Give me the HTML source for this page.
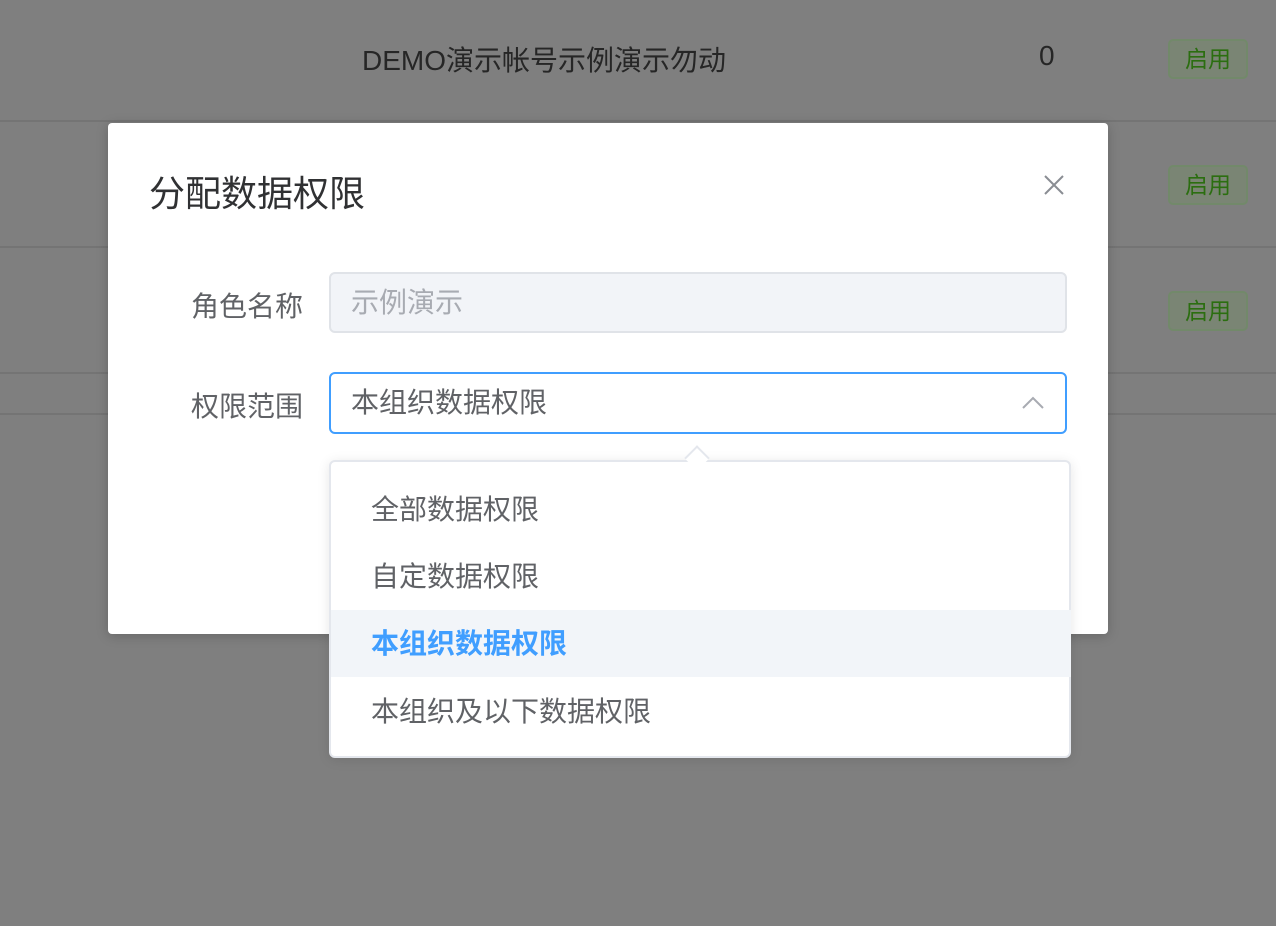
<!DOCTYPE html>
<html><head><meta charset="utf-8"><style>
*{margin:0;padding:0;box-sizing:border-box}
body{width:1276px;height:926px;overflow:hidden;background:#7f7f7f;font-family:"Liberation Sans","Noto Sans CJK SC",sans-serif;position:relative}
.abs{position:absolute}
.line{position:absolute;left:0;width:1276px;height:2px;background:#747474}
.tag{position:absolute;left:1168px;width:80px;height:40px;border:2px solid #72896a;background:#7a8574;border-radius:5px;color:#2b6e10;font-size:23px;line-height:36px;text-align:center}
.lbl{position:absolute;width:220px;left:83px;text-align:right;font-size:28px;color:#606266}
.item{position:absolute;left:0;width:740px;height:67px;line-height:67px;padding-left:40px;font-size:28px;color:#606266}
</style></head><body>
<div class="abs" style="left:362px;top:39px;font-size:28px;color:#262626">DEMO演示帐号示例演示勿动</div>
<div class="abs" style="left:1039px;top:40px;font-size:28px;color:#262626">0</div>
<div class="line" style="top:120px"></div>
<div class="line" style="top:246px"></div>
<div class="line" style="top:372px"></div>
<div class="line" style="top:413px"></div>
<div class="tag" style="top:39px">启用</div>
<div class="tag" style="top:165px">启用</div>
<div class="tag" style="top:291px">启用</div>

<div class="abs" style="left:108px;top:123px;width:1000px;height:511px;background:#fff;border-radius:4px;box-shadow:0 2px 12px rgba(0,0,0,.2)">
  <div class="abs" style="left:41px;top:42px;font-size:36px;color:#303133">分配数据权限</div>
  <svg class="abs" style="left:936px;top:52px" width="20" height="20" viewBox="0 0 20 20"><path d="M1 1L19 19M19 1L1 19" stroke="#8a8d93" stroke-width="2"/></svg>
</div>
<div class="lbl" style="top:285px">角色名称</div>
<div class="abs" style="left:329px;top:272px;width:738px;height:61px;background:#f2f4f8;border:2px solid #e0e3e8;border-radius:6px;font-size:28px;color:#a8abb2;padding-left:20px;line-height:57px">示例演示</div>
<div class="lbl" style="top:385px">权限范围</div>
<div class="abs" style="left:329px;top:372px;width:738px;height:62px;background:#fff;border:2px solid #409eff;border-radius:6px;font-size:28px;color:#606266;padding-left:20px;line-height:58px">本组织数据权限
  <svg class="abs" style="left:691px;top:22px" width="22" height="13" viewBox="0 0 22 13"><path d="M1 12L11 2L21 12" stroke="#a8abb2" stroke-width="2" fill="none"/></svg>
</div>
<div class="abs" style="left:329px;top:460px;width:742px;height:298px;background:#fff;border:2px solid #e4e7ed;border-radius:6px;box-shadow:0 2px 12px rgba(0,0,0,.1)">
  <div class="abs" style="left:357px;top:-13px;width:18px;height:18px;background:#fff;border-left:2px solid #e4e7ed;border-top:2px solid #e4e7ed;transform:rotate(45deg)"></div>
  <div class="item" style="top:14px">全部数据权限</div>
  <div class="item" style="top:81px">自定数据权限</div>
  <div class="item" style="top:148px;background:#f2f5f9;color:#409eff;font-weight:bold">本组织数据权限</div>
  <div class="item" style="top:216px">本组织及以下数据权限</div>
</div>
</body></html>
